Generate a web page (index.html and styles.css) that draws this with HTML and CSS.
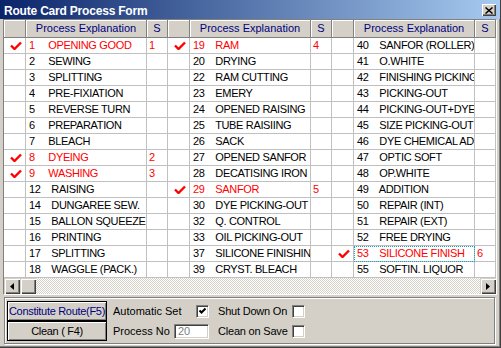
FILE: index.html
```html
<!DOCTYPE html>
<html lang="en">
<head>
    <meta charset="UTF-8">
    <title>Route Card Process Form</title>
    <link rel="stylesheet" href="styles.css">
</head>
<body>
    <div class="window">
        <div class="titlebar">
            <span class="title">Route Card Process Form</span>
            <span class="close"><svg width="8" height="7" viewBox="0 0 8 7"><path d="M0.5 0.5 7.5 6.5 M7.5 0.5 0.5 6.5"/></svg></span>
        </div>

        <div class="client">
            <div class="grid-box">
                <div class="grid">
                    <div class="h"></div><div class="h">Process Explanation</div><div class="h">S</div>
                    <div class="h"></div><div class="h">Process Explanation</div><div class="h">S</div>
                    <div class="h"></div><div class="h">Process Explanation</div><div class="h">S</div>

                    <div class="c"><svg class="tick" viewBox="0 0 12 9"><path d="M1 4.5 4.5 8 11 1.5"/></svg></div><div class="n on">1     OPENING GOOD</div><div class="s on">1</div>
                    <div class="c"><svg class="tick" viewBox="0 0 12 9"><path d="M1 4.5 4.5 8 11 1.5"/></svg></div><div class="n on">19    RAM</div><div class="s on">4</div>
                    <div class="c"></div><div class="n">40    SANFOR (ROLLER)</div><div class="s"></div>

                    <div class="c"></div><div class="n">2     SEWING</div><div class="s"></div>
                    <div class="c"></div><div class="n">20    DRYING</div><div class="s"></div>
                    <div class="c"></div><div class="n">41    O.WHITE</div><div class="s"></div>

                    <div class="c"></div><div class="n">3     SPLITTING</div><div class="s"></div>
                    <div class="c"></div><div class="n">22    RAM CUTTING</div><div class="s"></div>
                    <div class="c"></div><div class="n">42    FINISHING PICKING</div><div class="s"></div>

                    <div class="c"></div><div class="n">4     PRE-FIXIATION</div><div class="s"></div>
                    <div class="c"></div><div class="n">23    EMERY</div><div class="s"></div>
                    <div class="c"></div><div class="n">43    PICKING-OUT</div><div class="s"></div>

                    <div class="c"></div><div class="n">5     REVERSE TURN</div><div class="s"></div>
                    <div class="c"></div><div class="n">24    OPENED RAISING</div><div class="s"></div>
                    <div class="c"></div><div class="n">44    PICKING-OUT+DYE</div><div class="s"></div>

                    <div class="c"></div><div class="n">6     PREPARATION</div><div class="s"></div>
                    <div class="c"></div><div class="n">25    TUBE RAISIING</div><div class="s"></div>
                    <div class="c"></div><div class="n">45    SIZE PICKING-OUT</div><div class="s"></div>

                    <div class="c"></div><div class="n">7     BLEACH</div><div class="s"></div>
                    <div class="c"></div><div class="n">26    SACK</div><div class="s"></div>
                    <div class="c"></div><div class="n">46    DYE CHEMICAL ADD</div><div class="s"></div>

                    <div class="c"><svg class="tick" viewBox="0 0 12 9"><path d="M1 4.5 4.5 8 11 1.5"/></svg></div><div class="n on">8     DYEING</div><div class="s on">2</div>
                    <div class="c"></div><div class="n">27    OPENED SANFOR</div><div class="s"></div>
                    <div class="c"></div><div class="n">47    OPTIC SOFT</div><div class="s"></div>

                    <div class="c"><svg class="tick" viewBox="0 0 12 9"><path d="M1 4.5 4.5 8 11 1.5"/></svg></div><div class="n on">9     WASHING</div><div class="s on">3</div>
                    <div class="c"></div><div class="n">28    DECATISING IRON</div><div class="s"></div>
                    <div class="c"></div><div class="n">48    OP.WHITE</div><div class="s"></div>

                    <div class="c"></div><div class="n">12    RAISING</div><div class="s"></div>
                    <div class="c"><svg class="tick" viewBox="0 0 12 9"><path d="M1 4.5 4.5 8 11 1.5"/></svg></div><div class="n on">29    SANFOR</div><div class="s on">5</div>
                    <div class="c"></div><div class="n">49    ADDITION</div><div class="s"></div>

                    <div class="c"></div><div class="n">14    DUNGAREE SEW.</div><div class="s"></div>
                    <div class="c"></div><div class="n">30    DYE PICKING-OUT</div><div class="s"></div>
                    <div class="c"></div><div class="n">50    REPAIR (INT)</div><div class="s"></div>

                    <div class="c"></div><div class="n">15    BALLON SQUEEZE</div><div class="s"></div>
                    <div class="c"></div><div class="n">32    Q. CONTROL</div><div class="s"></div>
                    <div class="c"></div><div class="n">51    REPAIR (EXT)</div><div class="s"></div>

                    <div class="c"></div><div class="n">16    PRINTING</div><div class="s"></div>
                    <div class="c"></div><div class="n">33    OIL PICKING-OUT</div><div class="s"></div>
                    <div class="c"></div><div class="n">52    FREE DRYING</div><div class="s"></div>

                    <div class="c"></div><div class="n">17    SPLITTING</div><div class="s"></div>
                    <div class="c"></div><div class="n">37    SILICONE FINISHING</div><div class="s"></div>
                    <div class="c"><svg class="tick" viewBox="0 0 12 9"><path d="M1 4.5 4.5 8 11 1.5"/></svg></div><div class="n on focus">53    SILICONE FINISH</div><div class="s on">6</div>

                    <div class="c"></div><div class="n">18    WAGGLE (PACK.)</div><div class="s"></div>
                    <div class="c"></div><div class="n">39    CRYST. BLEACH</div><div class="s"></div>
                    <div class="c"></div><div class="n">55    SOFTIN. LIQUOR</div><div class="s"></div>
                </div>

                <div class="hscroll">
                    <span class="sb-btn"><svg width="4" height="7" viewBox="0 0 4 7"><path d="M4 0 0 3.5 4 7Z"/></svg></span>
                    <span class="sb-btn"></span>
                    <span class="sb-track"></span>
                    <span class="sb-btn"><svg width="4" height="7" viewBox="0 0 4 7"><path d="M0 0 4 3.5 0 7Z"/></svg></span>
                </div>
            </div>

            <div class="panel">
                <div class="btns">
                    <button class="btn btn-route">Constitute Route(F5)</button>
                    <button class="btn">Clean ( F4)</button>
                </div>
                <div class="opts">
                    <span class="lbl">Automatic Set</span>
                    <span class="chk chk-end"><svg width="11" height="11" viewBox="0 0 11 11"><path d="M2.5 4.5 4.5 6.5 8.5 2.5"/></svg></span>
                    <span class="lbl lbl-r">Shut Down On</span>
                    <span class="chk"></span>
                    <span class="lbl">Process No</span>
                    <span class="num">20</span>
                    <span class="lbl lbl-r">Clean on Save</span>
                    <span class="chk"></span>
                </div>
            </div>
        </div>
    </div>
</body>
</html>
```

FILE: styles.css
```css
body {
    margin: 0;
    font-family: "Liberation Sans", Arial, sans-serif;
    font-size: 11px;
    color: #000;
}

.window {
    width: 501px;
    height: 348px;
    box-sizing: border-box;
    background: #d4d0c8;
    border-right: 1px solid #404040;
    border-bottom: 1px solid #404040;
    box-shadow: inset -1px -1px #808080;
    display: flex;
    flex-direction: column;
}

.titlebar {
    height: 19px;
    flex: none;
    box-sizing: border-box;
    padding: 4px 4px 0 4px;
    display: flex;
    justify-content: space-between;
    align-items: flex-start;
    background: linear-gradient(to right, #0a246a, #a6caf0);
}

.title {
    color: #fff;
    font-weight: bold;
    font-size: 12px;
    line-height: 15px;
    letter-spacing: -0.2px;
}

.close {
    width: 14px;
    height: 12px;
    box-sizing: border-box;
    background: #d4d0c8;
    box-shadow: inset 1px 1px #fff, inset -1px -1px #404040, inset -2px -2px #808080;
    display: flex;
    align-items: center;
    justify-content: center;
    padding-right: 1px;
}

.close svg {
    stroke: #000;
    stroke-width: 1.5;
}

.client {
    flex: 1;
    display: flex;
    flex-direction: column;
    padding: 0 3px;
}

.grid-box {
    border: 1px solid;
    border-color: #808080 #fff #fff #808080;
}

.grid {
    display: grid;
    grid-template-columns: repeat(3, 22px 121px 21px);
    grid-template-rows: 18px repeat(15, 16px);
    background: #fff;
}

.grid > div {
    box-sizing: border-box;
    border-right: 1px solid #c0c0c0;
    border-bottom: 1px solid #c0c0c0;
    line-height: 15px;
    overflow: hidden;
    white-space: pre;
    letter-spacing: -0.35px;
}

.grid > .h {
    background: #d4d0c8;
    border-color: #808080;
    box-shadow: inset 1px 1px #fff;
    color: #000080;
    text-align: center;
    line-height: 17px;
    letter-spacing: 0;
}

.n {
    padding-left: 3px;
}

.s {
    padding-left: 2px;
}

.on {
    color: #f00;
}

.grid > .c {
    display: flex;
    align-items: center;
    justify-content: center;
    padding-left: 3px;
}

.tick {
    width: 12px;
    height: 9px;
    fill: none;
    stroke: #f00;
    stroke-width: 2.4;
}

.focus {
    outline: 1px dotted #10a8b8;
    outline-offset: -1px;
}

.hscroll {
    display: flex;
    height: 16px;
}

.sb-btn {
    width: 16px;
    height: 16px;
    box-sizing: border-box;
    background: #d4d0c8;
    box-shadow: inset 1px 1px #d4d0c8, inset 2px 2px #fff, inset -1px -1px #404040, inset -2px -2px #808080;
    display: flex;
    align-items: center;
    justify-content: center;
}

.sb-track {
    flex: 1;
    background: repeating-conic-gradient(#fff 0 25%, #d4d0c8 0 50%) 0 0 / 2px 2px;
}

.panel {
    margin: 2px 2px 0 1px;
    height: 47px;
    box-sizing: border-box;
    border: 1px solid #808080;
    box-shadow: inset 1px 1px #fff, 1px 1px #fff;
    padding: 3px 0 0 2px;
    display: flex;
    gap: 6px;
}

.btns {
    display: flex;
    flex-direction: column;
    width: 100px;
}

.btn {
    height: 20px;
    box-sizing: border-box;
    border: 1px solid #000;
    background: #d4d0c8;
    box-shadow: inset 1px 1px #fff, inset -1px -1px #808080;
    font-family: "Liberation Sans", Arial, sans-serif;
    font-size: 11px;
    letter-spacing: -0.3px;
    white-space: nowrap;
    color: #000;
    padding: 0;
}

.btn-route {
    color: #000080;
}

.opts {
    display: grid;
    grid-template-columns: 61px 35px 83px 13px;
    grid-template-rows: 20px 20px;
    align-items: center;
}

.lbl {
    white-space: nowrap;
}

.lbl-r {
    padding-left: 9px;
    letter-spacing: -0.2px;
}

.chk {
    width: 13px;
    height: 13px;
    box-sizing: border-box;
    background: #fff;
    border: 1px solid;
    border-color: #808080 #fff #fff #808080;
    box-shadow: inset 1px 1px #404040, inset -1px -1px #d4d0c8;
}

.chk svg {
    display: block;
    fill: none;
    stroke: #000;
    stroke-width: 2;
}

.chk-end {
    justify-self: end;
}

.num {
    width: 35px;
    height: 15px;
    box-sizing: border-box;
    background: #fff;
    border: 1px solid;
    border-color: #808080 #fff #fff #808080;
    box-shadow: inset 1px 1px #404040, inset -1px -1px #d4d0c8;
    color: #808080;
    padding-left: 3px;
    line-height: 13px;
}
```
